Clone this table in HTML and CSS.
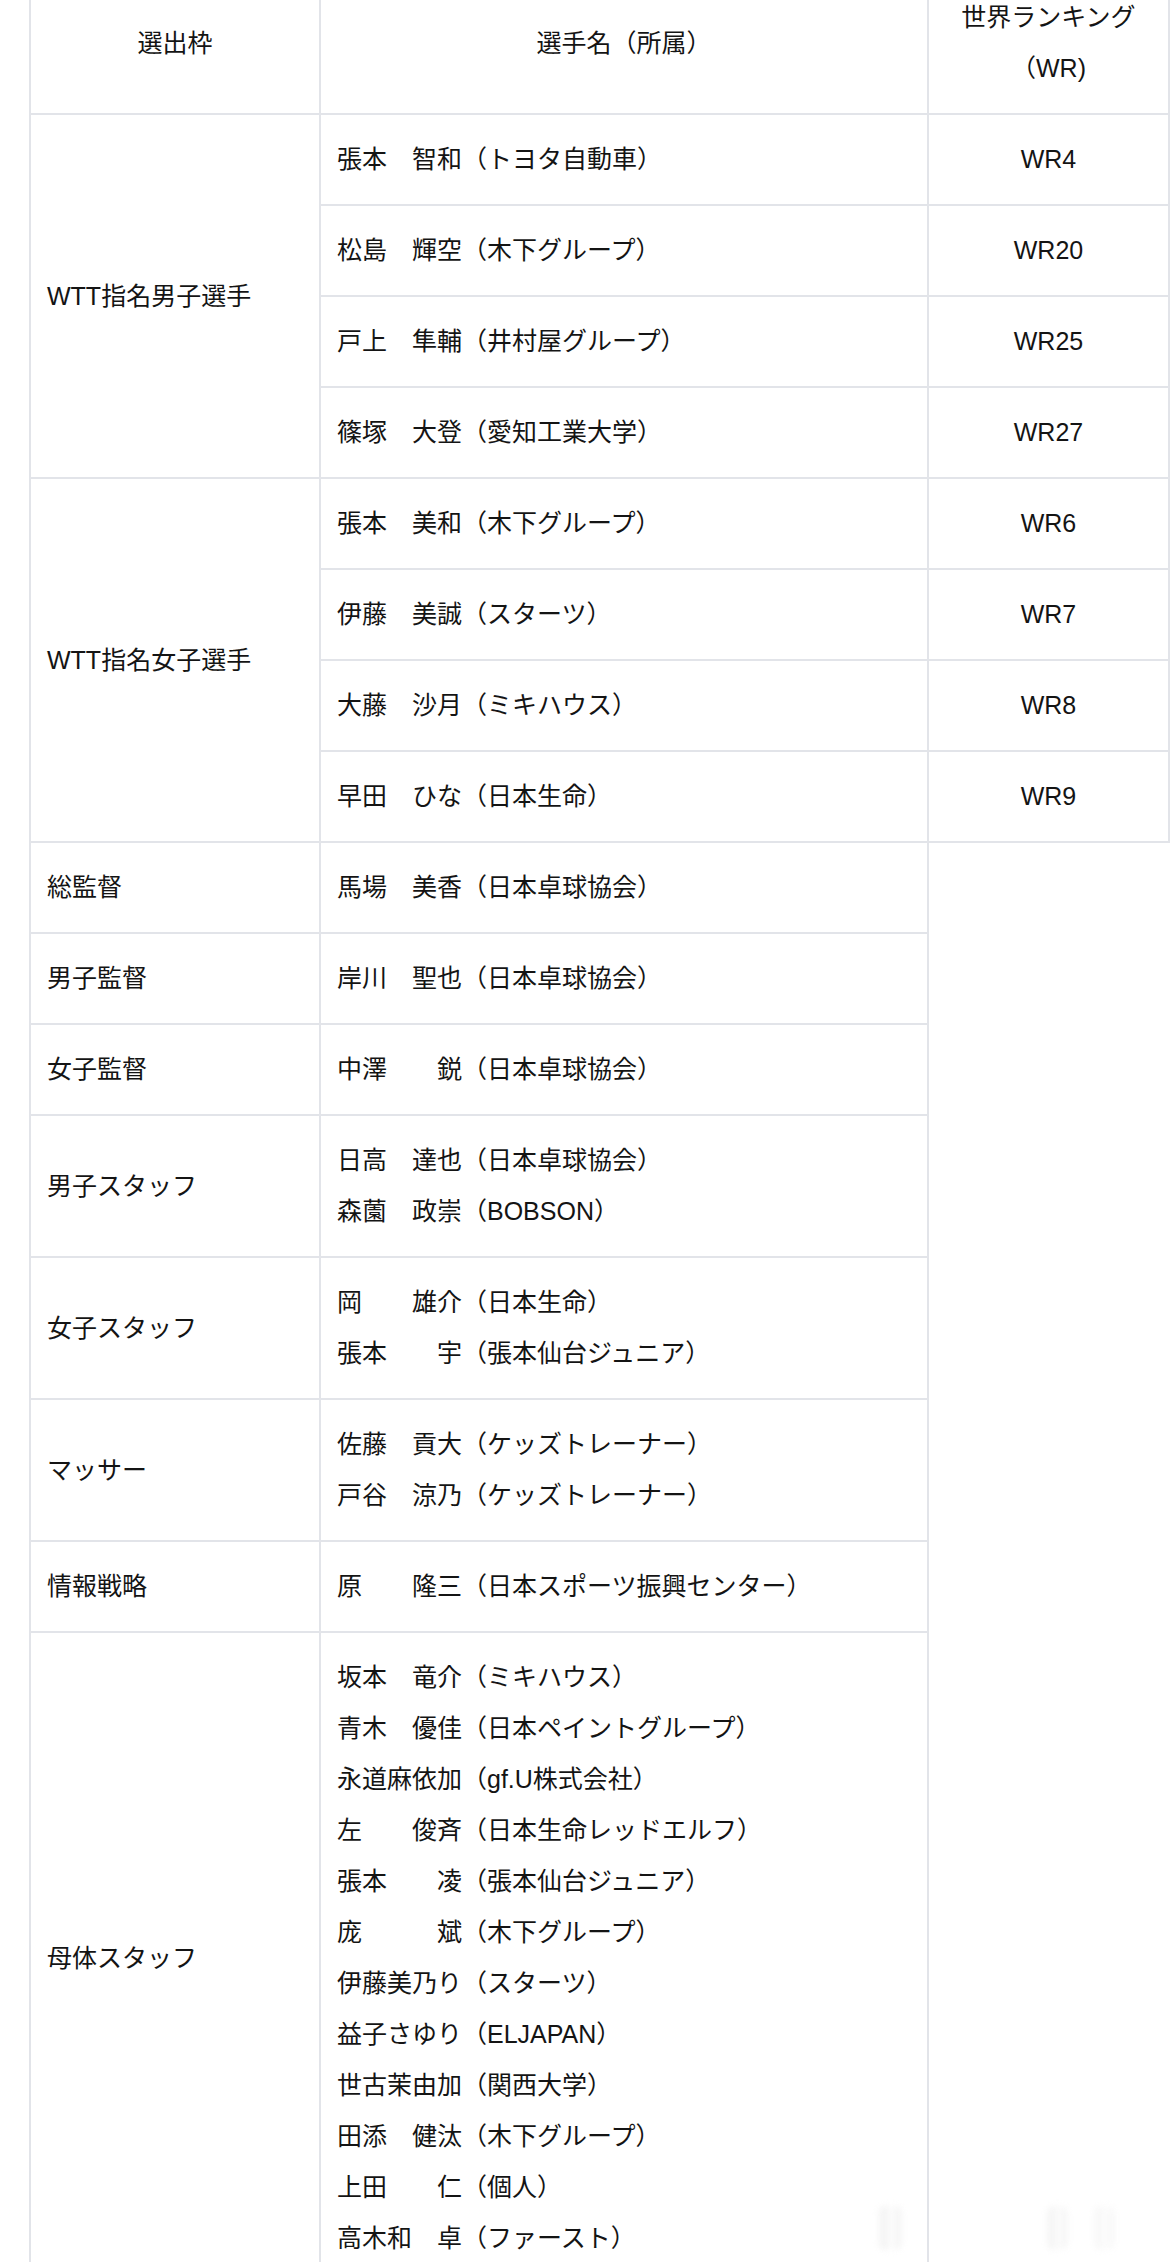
FILE: index.html
```html
<!DOCTYPE html>
<html lang="ja">
<head>
<meta charset="utf-8">
<title>選出選手一覧</title>
<link rel="stylesheet" href="styles.css">
</head>
<body>
<div class="page">
  <table class="roster">
    <colgroup>
      <col class="c-frame">
      <col class="c-name">
      <col class="c-rank">
    </colgroup>
    <thead>
      <tr>
        <th class="hd">選出枠</th>
        <th class="hd">選手名（所属）</th>
        <th class="hd">世界ランキング<br>（WR)</th>
      </tr>
    </thead>
    <tbody>
      <tr>
        <td class="frame" rowspan="4">WTT指名男子選手</td>
        <td class="name">張本　智和（トヨタ自動車）</td>
        <td class="rank">WR4</td>
      </tr>
      <tr>
        <td class="name">松島　輝空（木下グループ）</td>
        <td class="rank">WR20</td>
      </tr>
      <tr>
        <td class="name">戸上　隼輔（井村屋グループ）</td>
        <td class="rank">WR25</td>
      </tr>
      <tr>
        <td class="name">篠塚　大登（愛知工業大学）</td>
        <td class="rank">WR27</td>
      </tr>
      <tr>
        <td class="frame" rowspan="4">WTT指名女子選手</td>
        <td class="name">張本　美和（木下グループ）</td>
        <td class="rank">WR6</td>
      </tr>
      <tr>
        <td class="name">伊藤　美誠（スターツ）</td>
        <td class="rank">WR7</td>
      </tr>
      <tr>
        <td class="name">大藤　沙月（ミキハウス）</td>
        <td class="rank">WR8</td>
      </tr>
      <tr>
        <td class="name">早田　ひな（日本生命）</td>
        <td class="rank">WR9</td>
      </tr>
      <tr>
        <td class="frame">総監督</td>
        <td class="name">馬場　美香（日本卓球協会）</td>
      </tr>
      <tr>
        <td class="frame">男子監督</td>
        <td class="name">岸川　聖也（日本卓球協会）</td>
      </tr>
      <tr>
        <td class="frame">女子監督</td>
        <td class="name">中澤　　鋭（日本卓球協会）</td>
      </tr>
      <tr>
        <td class="frame">男子スタッフ</td>
        <td class="name">日高　達也（日本卓球協会）<br>森薗　政崇（BOBSON）</td>
      </tr>
      <tr>
        <td class="frame">女子スタッフ</td>
        <td class="name">岡　　雄介（日本生命）<br>張本　　宇（張本仙台ジュニア）</td>
      </tr>
      <tr>
        <td class="frame">マッサー</td>
        <td class="name">佐藤　貢大（ケッズトレーナー）<br>戸谷　涼乃（ケッズトレーナー）</td>
      </tr>
      <tr>
        <td class="frame">情報戦略</td>
        <td class="name">原　　隆三（日本スポーツ振興センター）</td>
      </tr>
      <tr>
        <td class="frame">母体スタッフ</td>
        <td class="name">坂本　竜介（ミキハウス）<br>青木　優佳（日本ペイントグループ）<br>永道麻依加（gf.U株式会社）<br>左　　俊斉（日本生命レッドエルフ）<br>張本　　凌（張本仙台ジュニア）<br>庞　　　斌（木下グループ）<br>伊藤美乃り（スターツ）<br>益子さゆり（ELJAPAN）<br>世古茉由加（関西大学）<br>田添　健汰（木下グループ）<br>上田　　仁（個人）<br>高木和　卓（ファースト）</td>
      </tr>
    </tbody>
  </table>
  <div class="ghost" aria-hidden="true">
    <span class="bar b1"></span>
    <span class="bar b2"></span>
    <span class="bar b3"></span>
  </div>
</div>
</body>
</html>
```

FILE: styles.css
```css
html, body {
  margin: 0;
  padding: 0;
  background: #ffffff;
}

body {
  font-family: "Liberation Sans", "Noto Sans CJK JP", sans-serif;
  color: #141414;
  font-size: 25px;
}

.page {
  position: relative;
  width: 1170px;
  overflow: hidden;
}

.roster {
  border-collapse: collapse;
  table-layout: fixed;
  width: 1139px;
  margin: -29px 0 0 29px;
}

.c-frame { width: 290px; }
.c-name { width: 608px; }
.c-rank { width: 241px; }

.roster th,
.roster td {
  border: 2px solid #e2e4e9;
  padding: 19px 16px;
  line-height: 51px;
  font-size: 25px;
  font-weight: 400;
  vertical-align: middle;
  white-space: nowrap;
}

.hd {
  text-align: center;
}

.frame {
  text-align: left;
}

.name {
  text-align: left;
}

.rank {
  text-align: center;
}

.ghost {
  position: absolute;
  left: 0;
  top: 2204px;
  width: 1170px;
  height: 50px;
  pointer-events: none;
  opacity: 0.45;
}

.bar {
  position: absolute;
  top: 2px;
  height: 44px;
  border-radius: 10px;
  background: linear-gradient(90deg, rgba(200,200,200,0) 0%, rgba(200,200,200,0.55) 30%, rgba(255,255,255,0.9) 55%, rgba(200,200,200,0.5) 80%, rgba(200,200,200,0) 100%);
  filter: blur(3px);
}

.b1 { left: 876px; width: 28px; }
.b2 { left: 1045px; width: 24px; }
.b3 { left: 1092px; width: 24px; opacity: 0.7; }
```
